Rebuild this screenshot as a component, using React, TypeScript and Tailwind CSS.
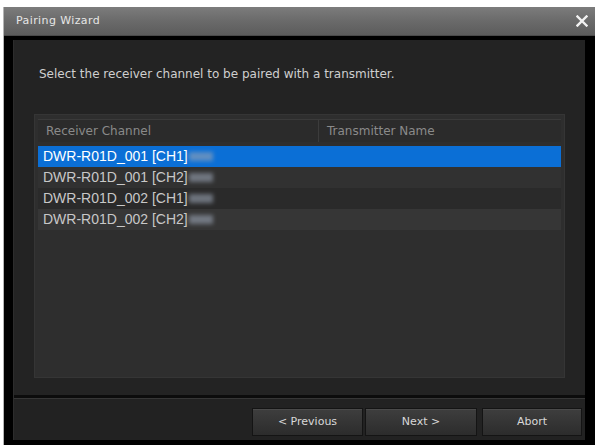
import React from "react";

const rows = [
  { name: "DWR-R01D_001 [CH1]", bg: "bg-[#0b6fd6]", text: "text-white" },
  { name: "DWR-R01D_001 [CH2]", bg: "bg-[#313131]", text: "text-[#c8c8c8]" },
  { name: "DWR-R01D_002 [CH1]", bg: "bg-[#2a2a2a]", text: "text-[#c8c8c8]" },
  { name: "DWR-R01D_002 [CH2]", bg: "bg-[#363636]", text: "text-[#c8c8c8]" },
];

function Btn({ label, w }: { label: string; w: string }) {
  return (
    <div
      className={`${w} h-[28px] flex items-center justify-center border border-[#141414] bg-gradient-to-b from-[#3e3e3e] to-[#2c2c2c] shadow-[inset_0_1px_0_#4a4a4a] text-[11px] text-[#d8d8d8]`}
      style={{ fontFamily: '"DejaVu Sans", Verdana, sans-serif' }}
    >
      {label}
    </div>
  );
}

export default function App() {
  return (
    <div
      className="w-[595px] h-[445px] bg-white pt-[7px] pl-[3px] flex overflow-hidden"
      style={{ fontFamily: '"Liberation Sans", Arial, sans-serif' }}
    >
      <div className="flex-1 flex flex-col bg-black border-l border-[#b4b4b4]">
        {/* title bar */}
        <div className="h-[29px] shrink-0 flex items-center justify-between pl-[12px] pr-[5px] bg-gradient-to-b from-[#7c7c7c] via-[#6a6a6a] to-[#5c5c5c] border-b border-[#4a4a4a]">
          <span
            className="text-[11px] text-[#e6e6e6] tracking-[0.4px]"
            style={{ fontFamily: '"DejaVu Sans", Verdana, sans-serif' }}
          >
            Pairing Wizard
          </span>
          <span className="w-[16px] h-[16px] flex items-center justify-center">
            <svg width="12" height="12" viewBox="0 0 12 12">
              <path d="M1.5 1.5 L10.5 10.5 M10.5 1.5 L1.5 10.5" stroke="#f2f2f2" strokeWidth="2.4" strokeLinecap="square" />
            </svg>
          </span>
        </div>
        {/* body frame */}
        <div className="flex-1 flex flex-col pt-[4px] pl-[9px] pr-[10px] pb-[5px]">
          <div className="flex-1 flex flex-col bg-[#232323] border-l border-[#2c2c2c]">
            <div className="flex-1 flex flex-col px-[20px] pt-[26px] pb-[17px]">
              <div
                className="pl-[5px] h-[16px] leading-[16px] text-[12px] text-[#cfcfcf]"
                style={{ fontFamily: '"DejaVu Sans", Verdana, sans-serif' }}
              >
                Select the receiver channel to be paired with a transmitter.
              </div>
              <div className="mt-[32px] flex-1 flex flex-col bg-[#2e2e2e] border border-[#353535] pt-[4px] px-[3px]">
                <div
                  className="h-[23px] flex border-t border-[#3a3a3a] bg-[#2b2b2b] text-[12px] text-[#8a8a8a]"
                  style={{ fontFamily: '"DejaVu Sans", Verdana, sans-serif' }}
                >
                  <div className="w-[281px] pl-[8px] flex items-center border-r border-[#3c3c3c]">Receiver Channel</div>
                  <div className="flex-1 pl-[8px] flex items-center">Transmitter Name</div>
                </div>
                <div className="mt-[4px] flex flex-col">
                  {rows.map((r) => (
                    <div key={r.name} className={`h-[21px] flex items-center pl-[5px] ${r.bg} ${r.text} text-[14px]`}>
                      <span>{r.name}</span>
                      <span className="ml-[1px] w-[24px] h-[9px] bg-[#9aa4b4] opacity-60 blur-[2px]" />
                    </div>
                  ))}
                </div>
              </div>
            </div>
            <div className="h-[3px] bg-[#0c0c0c]" />
            <div className="h-[42px] flex justify-end items-start pt-[9px] pr-[3px] border-t border-[#363636] bg-[#222222]">
              <Btn label="< Previous" w="w-[111px]" />
              <div className="w-[2px]" />
              <Btn label="Next >" w="w-[112px]" />
              <div className="w-[5px]" />
              <Btn label="Abort" w="w-[100px]" />
            </div>
          </div>
        </div>
      </div>
    </div>
  );
}
